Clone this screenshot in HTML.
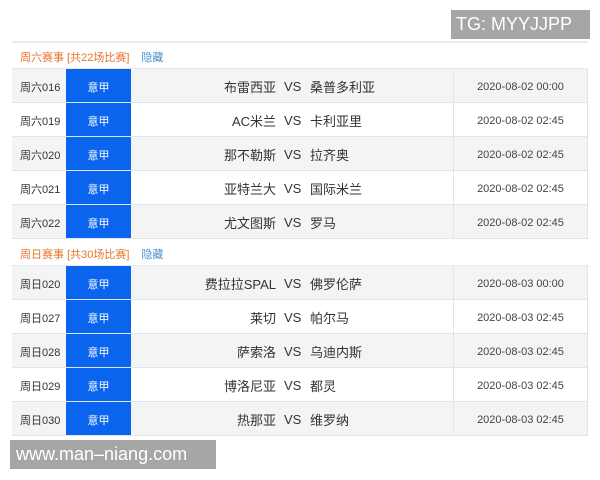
<!DOCTYPE html>
<html><head><meta charset="utf-8"><style>
*{margin:0;padding:0;box-sizing:border-box}
body{width:600px;height:480px;background:#fff;position:relative;overflow:hidden;font-family:"Liberation Sans","Noto Sans CJK SC",sans-serif;color:#333}
.tg{position:absolute;left:451px;top:10px;width:139px;height:29px;background:#a6a6a6;color:#fff;font-size:18px;line-height:29px;padding-left:5px}
.www{position:absolute;left:10px;top:440px;width:206px;height:29px;background:#a6a6a6;color:#fff;font-size:18px;line-height:29px;padding-left:6px}
.topline{position:absolute;left:12px;top:41px;width:576px;height:2px;background:#e3ecf0}
.hdr{position:absolute;left:12px;width:576px;height:26px;font-size:11px;display:flex;align-items:center;padding-left:8px;padding-top:2px;color:#e8742c;border-bottom:1px solid #e3eaef}
.hdr span{color:#4a8fd0;margin-left:12px}
.row{position:absolute;left:12px;width:576px;height:34px;border-bottom:1px solid #dde6ee;font-size:11px}
.row.g{background:#f4f4f4}
.row div{position:absolute;top:0;height:33px;display:flex;align-items:center;padding-top:2px}
.id{left:0;width:54px;padding-left:8px}
.lg{left:54px;width:65px;background:#0a64ee;color:#fff;justify-content:center}
.h{left:119px;width:145px;justify-content:flex-end;font-size:13px}
.vs{left:272px;width:20px;font-size:13px}
.a{left:298px;font-size:13px}
.t{left:441px;width:135px;justify-content:center;border-left:1px solid #dde6ee;border-right:1px solid #dde6ee;color:#444}
</style></head><body>
<div class="tg">TG: MYYJJPP</div>
<div class="topline"></div>
<div class="hdr" style="top:43px">周六赛事 [共22场比赛]<span>隐藏</span></div>
<div class="row g" style="top:69px"><div class="id">周六016</div><div class="lg">意甲</div><div class="h">布雷西亚</div><div class="vs">VS</div><div class="a">桑普多利亚</div><div class="t">2020-08-02 00:00</div></div>
<div class="row" style="top:103px"><div class="id">周六019</div><div class="lg">意甲</div><div class="h">AC米兰</div><div class="vs">VS</div><div class="a">卡利亚里</div><div class="t">2020-08-02 02:45</div></div>
<div class="row g" style="top:137px"><div class="id">周六020</div><div class="lg">意甲</div><div class="h">那不勒斯</div><div class="vs">VS</div><div class="a">拉齐奥</div><div class="t">2020-08-02 02:45</div></div>
<div class="row" style="top:171px"><div class="id">周六021</div><div class="lg">意甲</div><div class="h">亚特兰大</div><div class="vs">VS</div><div class="a">国际米兰</div><div class="t">2020-08-02 02:45</div></div>
<div class="row g" style="top:205px"><div class="id">周六022</div><div class="lg">意甲</div><div class="h">尤文图斯</div><div class="vs">VS</div><div class="a">罗马</div><div class="t">2020-08-02 02:45</div></div>
<div class="hdr" style="top:240px">周日赛事 [共30场比赛]<span>隐藏</span></div>
<div class="row g" style="top:266px"><div class="id">周日020</div><div class="lg">意甲</div><div class="h">费拉拉SPAL</div><div class="vs">VS</div><div class="a">佛罗伦萨</div><div class="t">2020-08-03 00:00</div></div>
<div class="row" style="top:300px"><div class="id">周日027</div><div class="lg">意甲</div><div class="h">莱切</div><div class="vs">VS</div><div class="a">帕尔马</div><div class="t">2020-08-03 02:45</div></div>
<div class="row g" style="top:334px"><div class="id">周日028</div><div class="lg">意甲</div><div class="h">萨索洛</div><div class="vs">VS</div><div class="a">乌迪内斯</div><div class="t">2020-08-03 02:45</div></div>
<div class="row" style="top:368px"><div class="id">周日029</div><div class="lg">意甲</div><div class="h">博洛尼亚</div><div class="vs">VS</div><div class="a">都灵</div><div class="t">2020-08-03 02:45</div></div>
<div class="row g" style="top:402px"><div class="id">周日030</div><div class="lg">意甲</div><div class="h">热那亚</div><div class="vs">VS</div><div class="a">维罗纳</div><div class="t">2020-08-03 02:45</div></div>
<div class="www">www.man–niang.com</div>
</body></html>
